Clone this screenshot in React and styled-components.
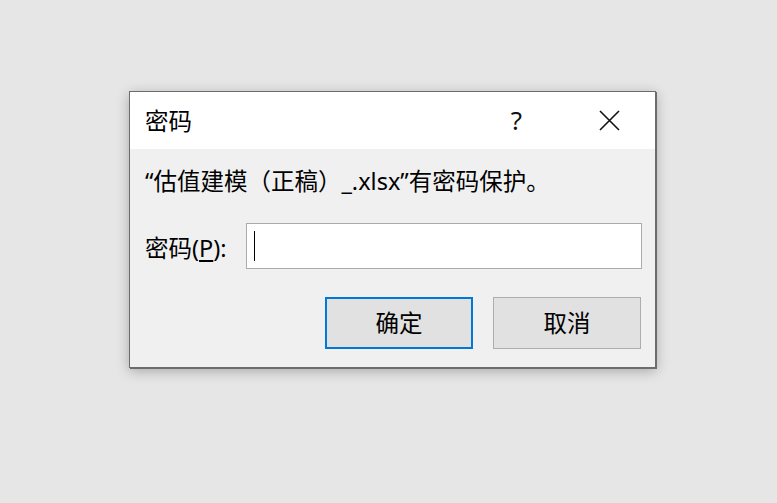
import React from "react";
import styled, { createGlobalStyle } from "styled-components";

const GlobalStyle = createGlobalStyle`
  html, body {
    margin: 0;
    padding: 0;
    background: #e6e6e6;
  }
  body {
    font-family: "Noto Sans", "Noto Sans CJK SC", sans-serif;
    color: #000;
  }
`;

const Page = styled.div`
  width: 777px;
  height: 503px;
  box-sizing: border-box;
  padding: 91px 0 0 129px;
  background: #e6e6e6;
`;

const Dialog = styled.div`
  width: 527px;
  box-sizing: border-box;
  border: 1px solid #6c6c6c;
  background: #f0f0f0;
  box-shadow: 1px 1px 0 #6c6c6c, 0 3px 12px rgba(0, 0, 0, 0.28);
  display: flex;
  flex-direction: column;
`;

const TitleBar = styled.div`
  height: 57px;
  background: #fff;
  display: flex;
  align-items: center;
`;

const Title = styled.div`
  flex: 1;
  padding-left: 15px;
  font-size: 23.5px;
  line-height: 30px;
`;

const TitleButton = styled.div`
  width: 91px;
  height: 57px;
  display: flex;
  align-items: center;
  justify-content: center;
  font-size: 26px;
  color: #111;
`;

const HelpButton = styled(TitleButton)`
  padding: 0 4px 2px 0;
  box-sizing: border-box;
`;

const Body = styled.div`
  padding: 17px 13px 18px 15px;
  display: flex;
  flex-direction: column;
`;

const Message = styled.div`
  font-size: 23.5px;
  line-height: 30px;
  white-space: nowrap;
`;

const FieldRow = styled.div`
  margin-top: 27px;
  display: flex;
  align-items: center;
`;

const Label = styled.div`
  width: 101px;
  font-size: 23.5px;
  line-height: 30px;
  padding-top: 3px;
  white-space: nowrap;

  u {
    text-decoration: underline;
    text-underline-offset: 3px;
  }
`;

const PasswordBox = styled.div`
  flex: 1;
  height: 46px;
  box-sizing: border-box;
  border: 1px solid #ababab;
  background: #fff;
  display: flex;
  align-items: center;
  padding-left: 7px;
`;

const Caret = styled.span`
  width: 1px;
  height: 30px;
  background: #000;
`;

const ButtonRow = styled.div`
  margin-top: 28px;
  display: flex;
  justify-content: flex-end;
  gap: 20px;
  padding-right: 1px;
`;

const Button = styled.div`
  width: 148px;
  height: 52px;
  box-sizing: border-box;
  background: #e1e1e1;
  border: ${(p) => (p.$primary ? "2px solid #0078d7" : "1px solid #adadad")};
  display: flex;
  align-items: center;
  justify-content: center;
  font-size: 23.5px;
  line-height: 30px;
`;

const CloseIcon = () => (
  <svg width="21" height="21" viewBox="0 0 21 21">
    <path d="M1 1 L20 20 M20 1 L1 20" stroke="#111" strokeWidth="1.6" fill="none" />
  </svg>
);

export default function App() {
  return (
    <>
      <GlobalStyle />
      <Page>
        <Dialog>
          <TitleBar>
            <Title>密码</Title>
            <HelpButton>?</HelpButton>
            <TitleButton>
              <CloseIcon />
            </TitleButton>
          </TitleBar>
          <Body>
            <Message>“估值建模（正稿）_.xlsx”有密码保护。</Message>
            <FieldRow>
              <Label>
                密码(<u>P</u>):
              </Label>
              <PasswordBox>
                <Caret />
              </PasswordBox>
            </FieldRow>
            <ButtonRow>
              <Button $primary>确定</Button>
              <Button>取消</Button>
            </ButtonRow>
          </Body>
        </Dialog>
      </Page>
    </>
  );
}
